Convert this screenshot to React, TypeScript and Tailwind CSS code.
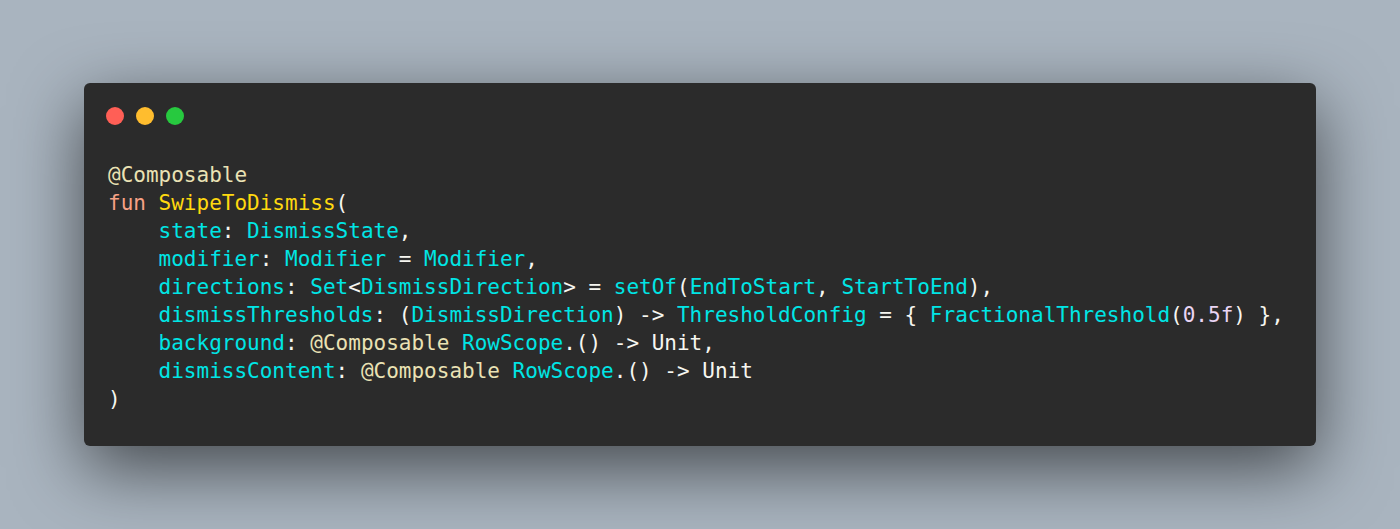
import React from 'react';

type Tok = [string, string];

const W = 'text-[#f6f6f0]';
const C = 'text-[#00e5e5]';
const A = 'text-[#eae2b4]';
const K = 'text-[#f7a185]';
const F = 'text-[#ffd90f]';
const N = 'text-[#ead5f4]';

const LINES: Tok[][] = [
  [['@Composable', A]],
  [['fun ', K], ['SwipeToDismiss', F], ['(', W]],
  [['    state', C], [': ', W], ['DismissState', C], [',', W]],
  [['    modifier', C], [': ', W], ['Modifier', C], [' = ', W], ['Modifier', C], [',', W]],
  [
    ['    directions', C], [': ', W], ['Set', C], ['<', W], ['DismissDirection', C], ['> = ', W],
    ['setOf', C], ['(', W], ['EndToStart', C], [', ', W], ['StartToEnd', C], ['),', W],
  ],
  [
    ['    dismissThresholds', C], [': (', W], ['DismissDirection', C], [') -> ', W],
    ['ThresholdConfig', C], [' = { ', W], ['FractionalThreshold', C], ['(', W], ['0.5f', N], [') },', W],
  ],
  [['    background', C], [': ', W], ['@Composable ', A], ['RowScope', C], ['.() -> Unit,', W]],
  [['    dismissContent', C], [': ', W], ['@Composable ', A], ['RowScope', C], ['.() -> Unit', W]],
  [[')', W]],
];

const App: React.FC = () => {
  return (
    <div className="w-[1400px] h-[529px] bg-[#a9b4bf] flex items-center justify-center">
      <div className="w-[1232px] h-[363px] bg-[#2b2b2b] rounded-[6px] shadow-[0_22px_70px_rgba(0,0,0,0.6)] pt-6 px-6">
        {/* traffic lights */}
        <div className="flex gap-3 -ml-0.5">
          <span className="w-[18px] h-[18px] rounded-full bg-[#ff5f56]" />
          <span className="w-[18px] h-[18px] rounded-full bg-[#ffbd2e]" />
          <span className="w-[18px] h-[18px] rounded-full bg-[#27c93f]" />
        </div>

        <pre className="mt-9 text-[21px] leading-[28px] font-['DejaVu_Sans_Mono',monospace]">
          {LINES.map((line, i) => (
            <div key={i}>
              {line.map(([t, cls], j) => (
                <span key={j} className={cls}>{t}</span>
              ))}
            </div>
          ))}
        </pre>
      </div>
    </div>
  );
};

export default App;
